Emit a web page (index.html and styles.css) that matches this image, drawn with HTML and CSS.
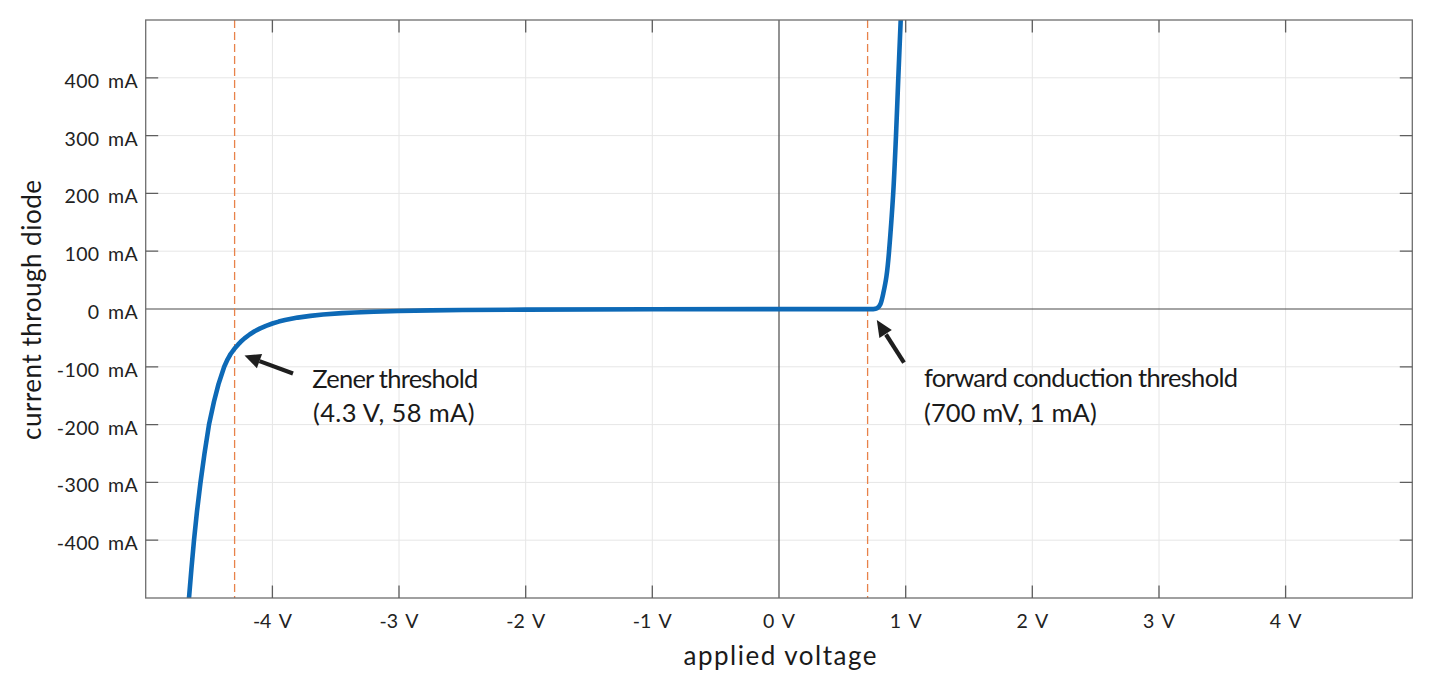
FILE: index.html
```html
<!DOCTYPE html>
<html lang="en">
<head>
<meta charset="utf-8">
<title>Diode I-V curve</title>
<link rel="stylesheet" href="styles.css">
</head>
<body>
<figure class="figure">
<svg class="chart" width="1456" height="680" viewBox="0 0 1456 680" xmlns="http://www.w3.org/2000/svg">
  <defs>
    <clipPath id="plotClip"><rect x="145.7" y="20" width="1266.6" height="578"/></clipPath>
  </defs>

  <g class="grid">
    <line x1="272.4" y1="20" x2="272.4" y2="598"/>
    <line x1="399.0" y1="20" x2="399.0" y2="598"/>
    <line x1="525.7" y1="20" x2="525.7" y2="598"/>
    <line x1="652.3" y1="20" x2="652.3" y2="598"/>
    <line x1="905.7" y1="20" x2="905.7" y2="598"/>
    <line x1="1032.3" y1="20" x2="1032.3" y2="598"/>
    <line x1="1159.0" y1="20" x2="1159.0" y2="598"/>
    <line x1="1285.6" y1="20" x2="1285.6" y2="598"/>
    <line x1="145.7" y1="77.8" x2="1412.3" y2="77.8"/>
    <line x1="145.7" y1="135.6" x2="1412.3" y2="135.6"/>
    <line x1="145.7" y1="193.4" x2="1412.3" y2="193.4"/>
    <line x1="145.7" y1="251.2" x2="1412.3" y2="251.2"/>
    <line x1="145.7" y1="366.8" x2="1412.3" y2="366.8"/>
    <line x1="145.7" y1="424.6" x2="1412.3" y2="424.6"/>
    <line x1="145.7" y1="482.4" x2="1412.3" y2="482.4"/>
    <line x1="145.7" y1="540.2" x2="1412.3" y2="540.2"/>
  </g>

  <g class="zero">
    <line x1="779" y1="20" x2="779" y2="598"/>
    <line x1="145.7" y1="309" x2="1412.3" y2="309"/>
  </g>

  <g class="threshold">
    <line x1="234.6" y1="20" x2="234.6" y2="598"/>
    <line x1="867.6" y1="20" x2="867.6" y2="598"/>
  </g>

  <g clip-path="url(#plotClip)">
    <path class="curve" d="M 184.9 655.8
      L 189 598 L 191.4 569.1 L 194 540.2 L 197 511.3 L 200.5 482.4
      L 204.5 453.5 L 209 424.6 L 214 401.5 L 218.5 384.1 L 224.2 366.8
      L 227.6 359.3 L 230.6 354 L 234.4 348.8 L 238.2 344.4 L 240.7 341.8
      L 244.5 338.4 L 249.6 334.5 L 254.6 331.3 L 259.7 328.6 L 266 325.8
      L 272.4 323.5 L 278.7 321.6 L 285 320.1 L 297.7 317.6 L 310.4 315.9
      L 323 314.5 L 342 313.1 L 354.7 312.5 L 373.7 311.7 L 399 311
      L 430.7 310.4 L 462.4 310 L 525.7 309.6 L 652.3 309.3 L 779 309.15
      L 872 309.15
      C 874.83 309.03 875.58 309.17 877 308.3
      C 878.42 307.43 879.45 306.5 880.5 304
      C 881.55 301.5 882.3 297.97 883.3 293.3
      C 884.3 288.63 885.55 282.88 886.5 276
      C 887.45 269.12 887.88 265.77 889 252
      C 890.12 238.23 892.03 212.8 893.2 193.4
      C 894.37 174 895.15 154.87 896 135.6
      C 896.85 116.33 897.52 97.07 898.3 77.8
      C 899.08 58.53 900 37.97 900.7 20
      L 902.5 -30"/>
  </g>

  <g class="frame">
    <rect x="145.7" y="20" width="1266.6" height="578"/>
  </g>

  <g class="ticks">
    <path d="M272.4 20v12.5M399 20v12.5M525.7 20v12.5M652.3 20v12.5M905.7 20v12.5M1032.3 20v12.5M1159 20v12.5M1285.6 20v12.5
             M272.4 598v-12.5M399 598v-12.5M525.7 598v-12.5M652.3 598v-12.5M905.7 598v-12.5M1032.3 598v-12.5M1159 598v-12.5M1285.6 598v-12.5
             M145.7 77.8h12.5M145.7 135.6h12.5M145.7 193.4h12.5M145.7 251.2h12.5M145.7 366.8h12.5M145.7 424.6h12.5M145.7 482.4h12.5M145.7 540.2h12.5
             M1412.3 77.8h-12.5M1412.3 135.6h-12.5M1412.3 193.4h-12.5M1412.3 251.2h-12.5M1412.3 366.8h-12.5M1412.3 424.6h-12.5M1412.3 482.4h-12.5M1412.3 540.2h-12.5"/>
  </g>

  <g class="arrow">
    <line x1="293" y1="373.5" x2="259.5" y2="361.1"/>
    <polygon points="244.5,355.5 262.1,354 256.9,368.2"/>
    <line x1="904" y1="362.7" x2="886" y2="334.5"/>
    <polygon points="876.8,320 891.8,329.9 879.4,337.9"/>
  </g>

  <g class="ytick">
    <text x="138" y="87.8">400 mA</text>
    <text x="138" y="145.6">300 mA</text>
    <text x="138" y="203.4">200 mA</text>
    <text x="138" y="261.2">100 mA</text>
    <text x="138" y="319">0 mA</text>
    <text x="138" y="376.8">-100 mA</text>
    <text x="138" y="434.6">-200 mA</text>
    <text x="138" y="492.4">-300 mA</text>
    <text x="138" y="550.2">-400 mA</text>
  </g>

  <g class="xtick">
    <text x="272.4" y="628">-4 V</text>
    <text x="399" y="628">-3 V</text>
    <text x="525.7" y="628">-2 V</text>
    <text x="652.3" y="628">-1 V</text>
    <text x="779" y="628">0 V</text>
    <text x="905.7" y="628">1 V</text>
    <text x="1032.3" y="628">2 V</text>
    <text x="1159" y="628">3 V</text>
    <text x="1285.6" y="628">4 V</text>
  </g>

  <text class="axis-label x-label" x="780" y="665" textLength="193" lengthAdjust="spacing">applied voltage</text>
  <text class="axis-label y-label" transform="translate(40.7 310) rotate(-90)" textLength="260" lengthAdjust="spacing">current through diode</text>

  <g class="note">
    <text x="312.3" y="388.3" textLength="166" lengthAdjust="spacing">Zener threshold</text>
    <text x="313" y="422" textLength="161.5" lengthAdjust="spacing">(4.3 V, 58 mA)</text>
    <text x="924" y="387.3" textLength="314" lengthAdjust="spacing">forward conduction threshold</text>
    <text x="924" y="421.7" textLength="172.7" lengthAdjust="spacing">(700 mV, 1 mA)</text>
  </g>
</svg>
</figure>
</body>
</html>
```

FILE: styles.css
```css
html, body {
  margin: 0;
  padding: 0;
  background: #ffffff;
}

.figure {
  margin: 0;
  width: 1456px;
  height: 680px;
  overflow: hidden;
}

.chart {
  display: block;
  font-family: Lato, "Open Sans", "DejaVu Sans", sans-serif;
}

.grid line {
  stroke: #e6e6e6;
  stroke-width: 1;
}

.zero line {
  stroke: #4a4a4a;
  stroke-width: 1.2;
}

.threshold line {
  stroke: #e8824a;
  stroke-width: 1.3;
  stroke-dasharray: 8 4;
}

.curve {
  fill: none;
  stroke: #0d69b6;
  stroke-width: 4.6;
  stroke-linejoin: round;
  stroke-linecap: butt;
}

.frame rect {
  fill: none;
  stroke: #6e6e6e;
  stroke-width: 1.3;
}

.ticks path {
  fill: none;
  stroke: #5e5e5e;
  stroke-width: 1.3;
}

.arrow line {
  stroke: #1e1e1e;
  stroke-width: 4.2;
}

.arrow polygon {
  fill: #1e1e1e;
}

.ytick text {
  font-size: 19.5px;
  fill: #222222;
  text-anchor: end;
  letter-spacing: 0.4px;
  word-spacing: 3px;
}

.xtick text {
  font-size: 19.5px;
  fill: #222222;
  text-anchor: middle;
  word-spacing: 3px;
}

.axis-label {
  font-size: 26px;
  fill: #1a1a1a;
  text-anchor: middle;
}

.note text {
  font-size: 25.5px;
  fill: #1a1a1a;
}
```
